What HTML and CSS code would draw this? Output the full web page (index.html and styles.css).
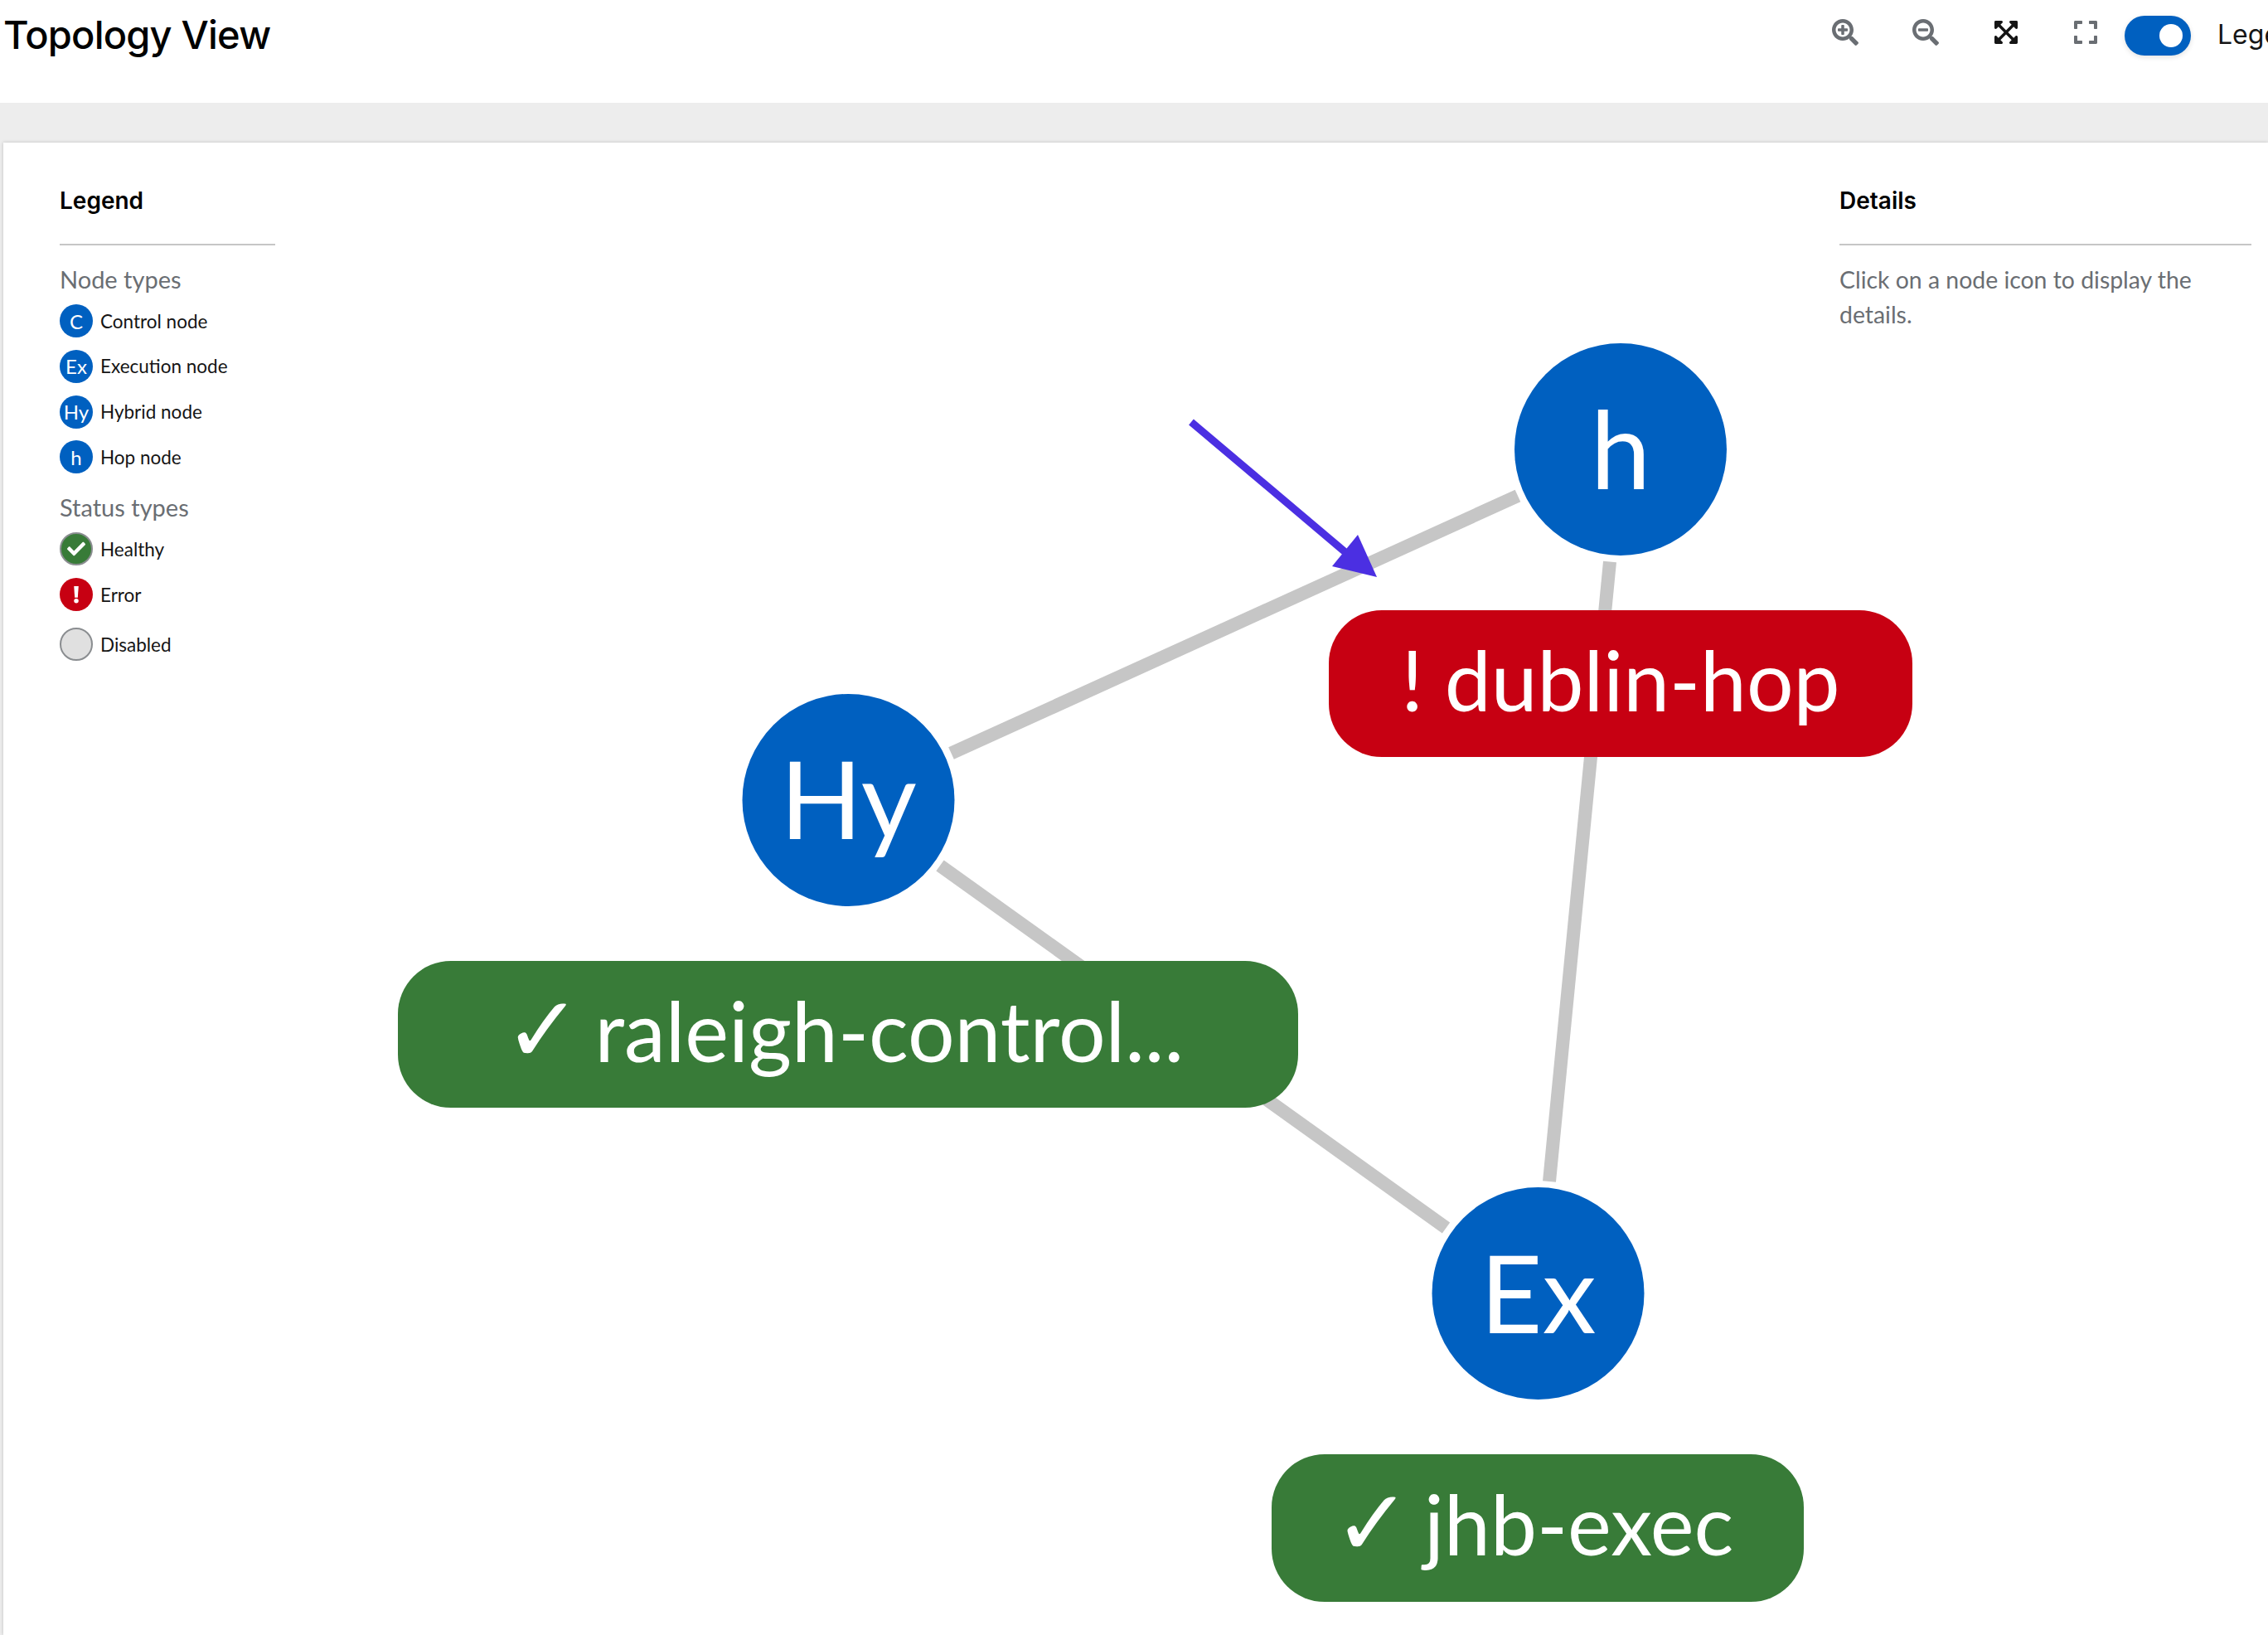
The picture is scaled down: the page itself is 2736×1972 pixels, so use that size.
FILE: index.html
```html
<!DOCTYPE html>
<html lang="en">
<head>
  <meta charset="UTF-8">
  <title>Topology View</title>
  <link rel="stylesheet" href="styles.css">
</head>
<body>
  <header class="topbar">
    <h1 class="title">Topology View</h1>
    <div class="toolbar">
      <button class="tool tool-wide">
        <svg class="icon icon-grey" viewBox="0 0 512 512"><path d="M304 192v32c0 6.6-5.4 12-12 12h-56v56c0 6.6-5.4 12-12 12h-32c-6.6 0-12-5.4-12-12v-56h-56c-6.6 0-12-5.4-12-12v-32c0-6.6 5.4-12 12-12h56v-56c0-6.6 5.4-12 12-12h32c6.6 0 12 5.4 12 12v56h56c6.6 0 12 5.4 12 12zm201 284.7L476.7 505c-9.4 9.4-24.6 9.4-33.9 0L343 405.3c-4.5-4.5-7-10.6-7-17V372c-35.3 27.6-79.7 44-128 44C93.1 416 0 322.9 0 208S93.1 0 208 0s208 93.1 208 208c0 48.3-16.4 92.7-44 128h16.3c6.4 0 12.5 2.5 17 7l99.7 99.7c9.3 9.4 9.3 24.6 0 34zM344 208c0-75.2-60.8-136-136-136S72 132.8 72 208s60.8 136 136 136 136-60.8 136-136z"/></svg>
      </button>
      <button class="tool tool-wide">
        <svg class="icon icon-grey" viewBox="0 0 512 512"><path d="M304 192v32c0 6.6-5.4 12-12 12H124c-6.6 0-12-5.4-12-12v-32c0-6.6 5.4-12 12-12h168c6.6 0 12 5.4 12 12zm201 284.7L476.7 505c-9.4 9.4-24.6 9.4-33.9 0L343 405.3c-4.5-4.5-7-10.6-7-17V372c-35.3 27.6-79.7 44-128 44C93.1 416 0 322.9 0 208S93.1 0 208 0s208 93.1 208 208c0 48.3-16.4 92.7-44 128h16.3c6.4 0 12.5 2.5 17 7l99.7 99.7c9.3 9.4 9.3 24.6 0 34zM344 208c0-75.2-60.8-136-136-136S72 132.8 72 208s60.8 136 136 136 136-60.8 136-136z"/></svg>
      </button>
      <button class="tool tool-narrow">
        <svg class="icon-tall icon-dark" viewBox="0 0 448 512"><path d="M448 344v112a23.94 23.94 0 0 1-24 24H312c-21.39 0-32.09-25.9-17-41l36.2-36.2L224 295.6 116.77 402.9 153 439c15.09 15.1 4.39 41-17 41H24a23.94 23.94 0 0 1-24-24V344c0-21.4 25.89-32.1 41-17l36.19 36.2L184.46 256 77.18 148.7 41 185c-15.1 15.1-41 4.4-41-17V56a23.94 23.94 0 0 1 24-24h112c21.39 0 32.09 25.9 17 41l-36.2 36.2L224 216.4l107.23-107.3L295 73c-15.09-15.1-4.39-41 17-41h112a23.94 23.94 0 0 1 24 24v112c0 21.4-25.89 32.1-41 17l-36.19-36.2L263.54 256l107.28 107.3L407 327.1c15.1-15.2 41-4.5 41 16.9z"/></svg>
      </button>
      <button class="tool tool-narrow">
        <svg class="icon-tall icon-grey" viewBox="0 0 448 512"><path d="M0 180V56c0-13.3 10.7-24 24-24h124c6.6 0 12 5.4 12 12v40c0 6.6-5.4 12-12 12H64v84c0 6.6-5.4 12-12 12H12c-6.6 0-12-5.4-12-12zM288 44v40c0 6.6 5.4 12 12 12h84v84c0 6.6 5.4 12 12 12h40c6.6 0 12-5.4 12-12V56c0-13.3-10.7-24-24-24H300c-6.6 0-12 5.4-12 12zm148 276h-40c-6.6 0-12 5.4-12 12v84h-84c-6.6 0-12 5.4-12 12v40c0 6.6 5.4 12 12 12h124c13.3 0 24-10.7 24-24V332c0-6.6-5.4-12-12-12zM160 468v-40c0-6.6-5.4-12-12-12H64v-84c0-6.6-5.4-12-12-12H12c-6.6 0-12 5.4-12 12v124c0 13.3 10.7 24 24 24h124c6.6 0 12-5.4 12-12z"/></svg>
      </button>
      <span class="switch"><span class="switch-knob"></span></span>
      <span class="switch-label">Legend</span>
    </div>
  </header>

  <div class="band"></div>

  <main class="panel">
    <svg class="graph" viewBox="4 172 2732 1800">
      <line class="link" x1="1831" y1="598" x2="1147.5" y2="908.5"/>
      <line class="link" x1="1134" y1="1044" x2="1744.5" y2="1481"/>
      <line class="link" x1="1942" y1="677.5" x2="1869" y2="1425"/>

      <circle class="node" cx="1955" cy="542" r="128"/>
      <text class="node-text" x="1955" y="589">h</text>
      <rect class="pill pill-error" x="1603" y="736" width="704" height="177" rx="64"/>
      <text class="pill-text" x="1955" y="858">! dublin-hop</text>

      <circle class="node" cx="1023.5" cy="965" r="128"/>
      <text class="node-text" x="1023.5" y="1012">Hy</text>
      <rect class="pill pill-ok" x="480" y="1159" width="1086" height="177" rx="64"/>
      <text class="pill-text" x="1018" y="1281"><tspan class="check">✓</tspan><tspan dx="-10"> raleigh-control...</tspan></text>

      <circle class="node" cx="1855.5" cy="1560" r="128"/>
      <text class="node-text" x="1855.5" y="1608">Ex</text>
      <rect class="pill pill-ok" x="1534" y="1754" width="642" height="178" rx="64"/>
      <text class="pill-text" x="1850" y="1876"><tspan class="check">✓</tspan><tspan dx="-10"> jhb-exec</tspan></text>

      <line class="arrow-line" x1="1437" y1="509" x2="1630" y2="672"/>
      <polygon class="arrow-head" points="1661,696 1607,683 1638,645"/>
    </svg>

    <aside class="legend">
      <h3 class="side-title">Legend</h3>
      <h4 class="sub-title">Node types</h4>
      <ul class="legend-list">
        <li class="legend-row"><span class="badge badge-node">C</span>Control node</li>
        <li class="legend-row"><span class="badge badge-node">Ex</span>Execution node</li>
        <li class="legend-row"><span class="badge badge-node">Hy</span>Hybrid node</li>
        <li class="legend-row"><span class="badge badge-node">h</span>Hop node</li>
      </ul>
      <h4 class="sub-title sub-status">Status types</h4>
      <ul class="legend-list">
        <li class="legend-row">
          <span class="badge badge-ok">
            <svg class="badge-icon" viewBox="0 0 512 512"><path d="M173.898 439.404l-166.4-166.4c-9.997-9.997-9.997-26.206 0-36.204l36.203-36.204c9.997-9.998 26.207-9.998 36.204 0L192 312.69 432.095 72.596c9.997-9.997 26.207-9.997 36.204 0l36.203 36.204c9.997 9.997 9.997 26.206 0 36.204l-294.4 294.401c-9.998 9.997-26.207 9.997-36.204-.001z"/></svg>
          </span>Healthy
        </li>
        <li class="legend-row">
          <span class="badge badge-error">
            <svg class="badge-icon" viewBox="0 0 24 24"><path d="M9 1h6l-1 15h-4z"/><circle cx="12" cy="20.5" r="3"/></svg>
          </span>Error
        </li>
        <li class="legend-row row-disabled"><span class="badge badge-off"></span>Disabled</li>
      </ul>
    </aside>

    <aside class="details">
      <h3 class="side-title">Details</h3>
      <p class="details-text">Click on a node icon to display the details.</p>
    </aside>
  </main>
</body>
</html>
```

FILE: styles.css
```css
* {
  box-sizing: border-box;
}

html, body {
  margin: 0;
  height: 1972px;
  overflow: hidden;
}

body {
  width: 2736px;
  background: #ededed;
  font-family: "Lato", "Liberation Sans", sans-serif;
  color: #151515;
}

.topbar {
  display: flex;
  align-items: flex-start;
  height: 124px;
  background: #fff;
}

.title {
  flex: 0 0 2178px;
  margin: 0;
  padding: 10px 0 0 4px;
  font-family: "Inter", "Liberation Sans", sans-serif;
  font-size: 47px;
  font-weight: 500;
  line-height: 64px;
  letter-spacing: -0.8px;
  color: #000;
}

.toolbar {
  display: flex;
  flex: none;
  align-items: flex-start;
  white-space: nowrap;
}

.tool {
  display: flex;
  height: 78px;
  padding: 23px 0 0;
  border: 0;
  background: none;
}

.tool-wide {
  width: 97px;
  padding-left: 32px;
}

.tool-narrow {
  width: 96px;
  padding-left: 34px;
}

.icon {
  width: 32px;
  height: 32px;
}

.icon-tall {
  width: 28px;
  height: 32px;
}

.icon-grey {
  fill: #6a6e73;
}

.icon-dark {
  fill: #151515;
}

.switch {
  display: flex;
  align-items: center;
  justify-content: flex-end;
  width: 80px;
  height: 48px;
  margin: 19px 32px 0 -1px;
  padding-right: 10px;
  border-radius: 24px;
  background: #0060c0;
  box-shadow: 0 2px 6px rgba(3, 3, 3, 0.12);
}

.switch-knob {
  width: 28px;
  height: 28px;
  border-radius: 50%;
  background: #fff;
}

.switch-label {
  margin-top: 22px;
  font-family: "Inter", "Liberation Sans", sans-serif;
  font-size: 32px;
  line-height: 40px;
}

.band {
  height: 48px;
}

.panel {
  position: relative;
  display: flex;
  justify-content: space-between;
  height: 1800px;
  margin-left: 4px;
  padding: 0 20px 0 68px;
  background: #fff;
  box-shadow: 0 0 4px rgba(3, 3, 3, 0.2);
}

.graph {
  position: absolute;
  top: 0;
  left: 0;
  width: 2732px;
  height: 1800px;
}

.link {
  stroke: #c6c6c6;
  stroke-width: 16;
}

.node {
  fill: #0060c0;
}

.pill-error {
  fill: #c70012;
}

.pill-ok {
  fill: #387b38;
}

.node-text, .pill-text {
  fill: #fff;
  text-anchor: middle;
}

.node-text {
  font-size: 130px;
}

.pill-text {
  font-size: 100px;
}

.check {
  font-family: "DejaVu Sans", sans-serif;
  font-size: 112px;
}

.arrow-line {
  stroke: #4b2fe2;
  stroke-width: 9;
}

.arrow-head {
  fill: #4b2fe2;
}

.legend, .details {
  position: relative;
}

.legend {
  width: 260px;
}

.details {
  width: 497px;
}

.side-title {
  height: 124px;
  margin: 0;
  padding-top: 52px;
  border-bottom: 2px solid #c6c6c6;
  font-family: "Inter", "Liberation Sans", sans-serif;
  font-size: 28px;
  font-weight: 600;
  line-height: 36px;
  color: #000;
}

.sub-title {
  margin: 23px 0 0;
  font-size: 29px;
  font-weight: 400;
  line-height: 36px;
  color: #6a6e73;
}

.sub-status {
  margin-top: 23px;
}

.legend-list {
  margin: 12px 0 0;
  padding: 0;
  list-style: none;
}

.legend-row {
  display: flex;
  align-items: center;
  height: 40px;
  margin-bottom: 14.8px;
  font-size: 22.5px;
}

.row-disabled {
  margin-top: 20px;
}

.badge {
  display: flex;
  flex: none;
  align-items: center;
  justify-content: center;
  width: 40px;
  height: 40px;
  margin-right: 9px;
  border-radius: 50%;
  font-size: 24px;
  color: #fff;
}

.badge-node {
  background: #0060c0;
}

.badge-ok {
  border: 2px solid #8a8d90;
  background: #387b38;
}

.badge-error {
  background: #c70012;
}

.badge-off {
  border: 2px solid #8a8d90;
  background: #e0e0e0;
}

.badge-icon {
  width: 22px;
  height: 22px;
  fill: #fff;
}

.details-text {
  margin: 20px 0 0;
  font-size: 28.4px;
  line-height: 42px;
  color: #6a6e73;
}
```
